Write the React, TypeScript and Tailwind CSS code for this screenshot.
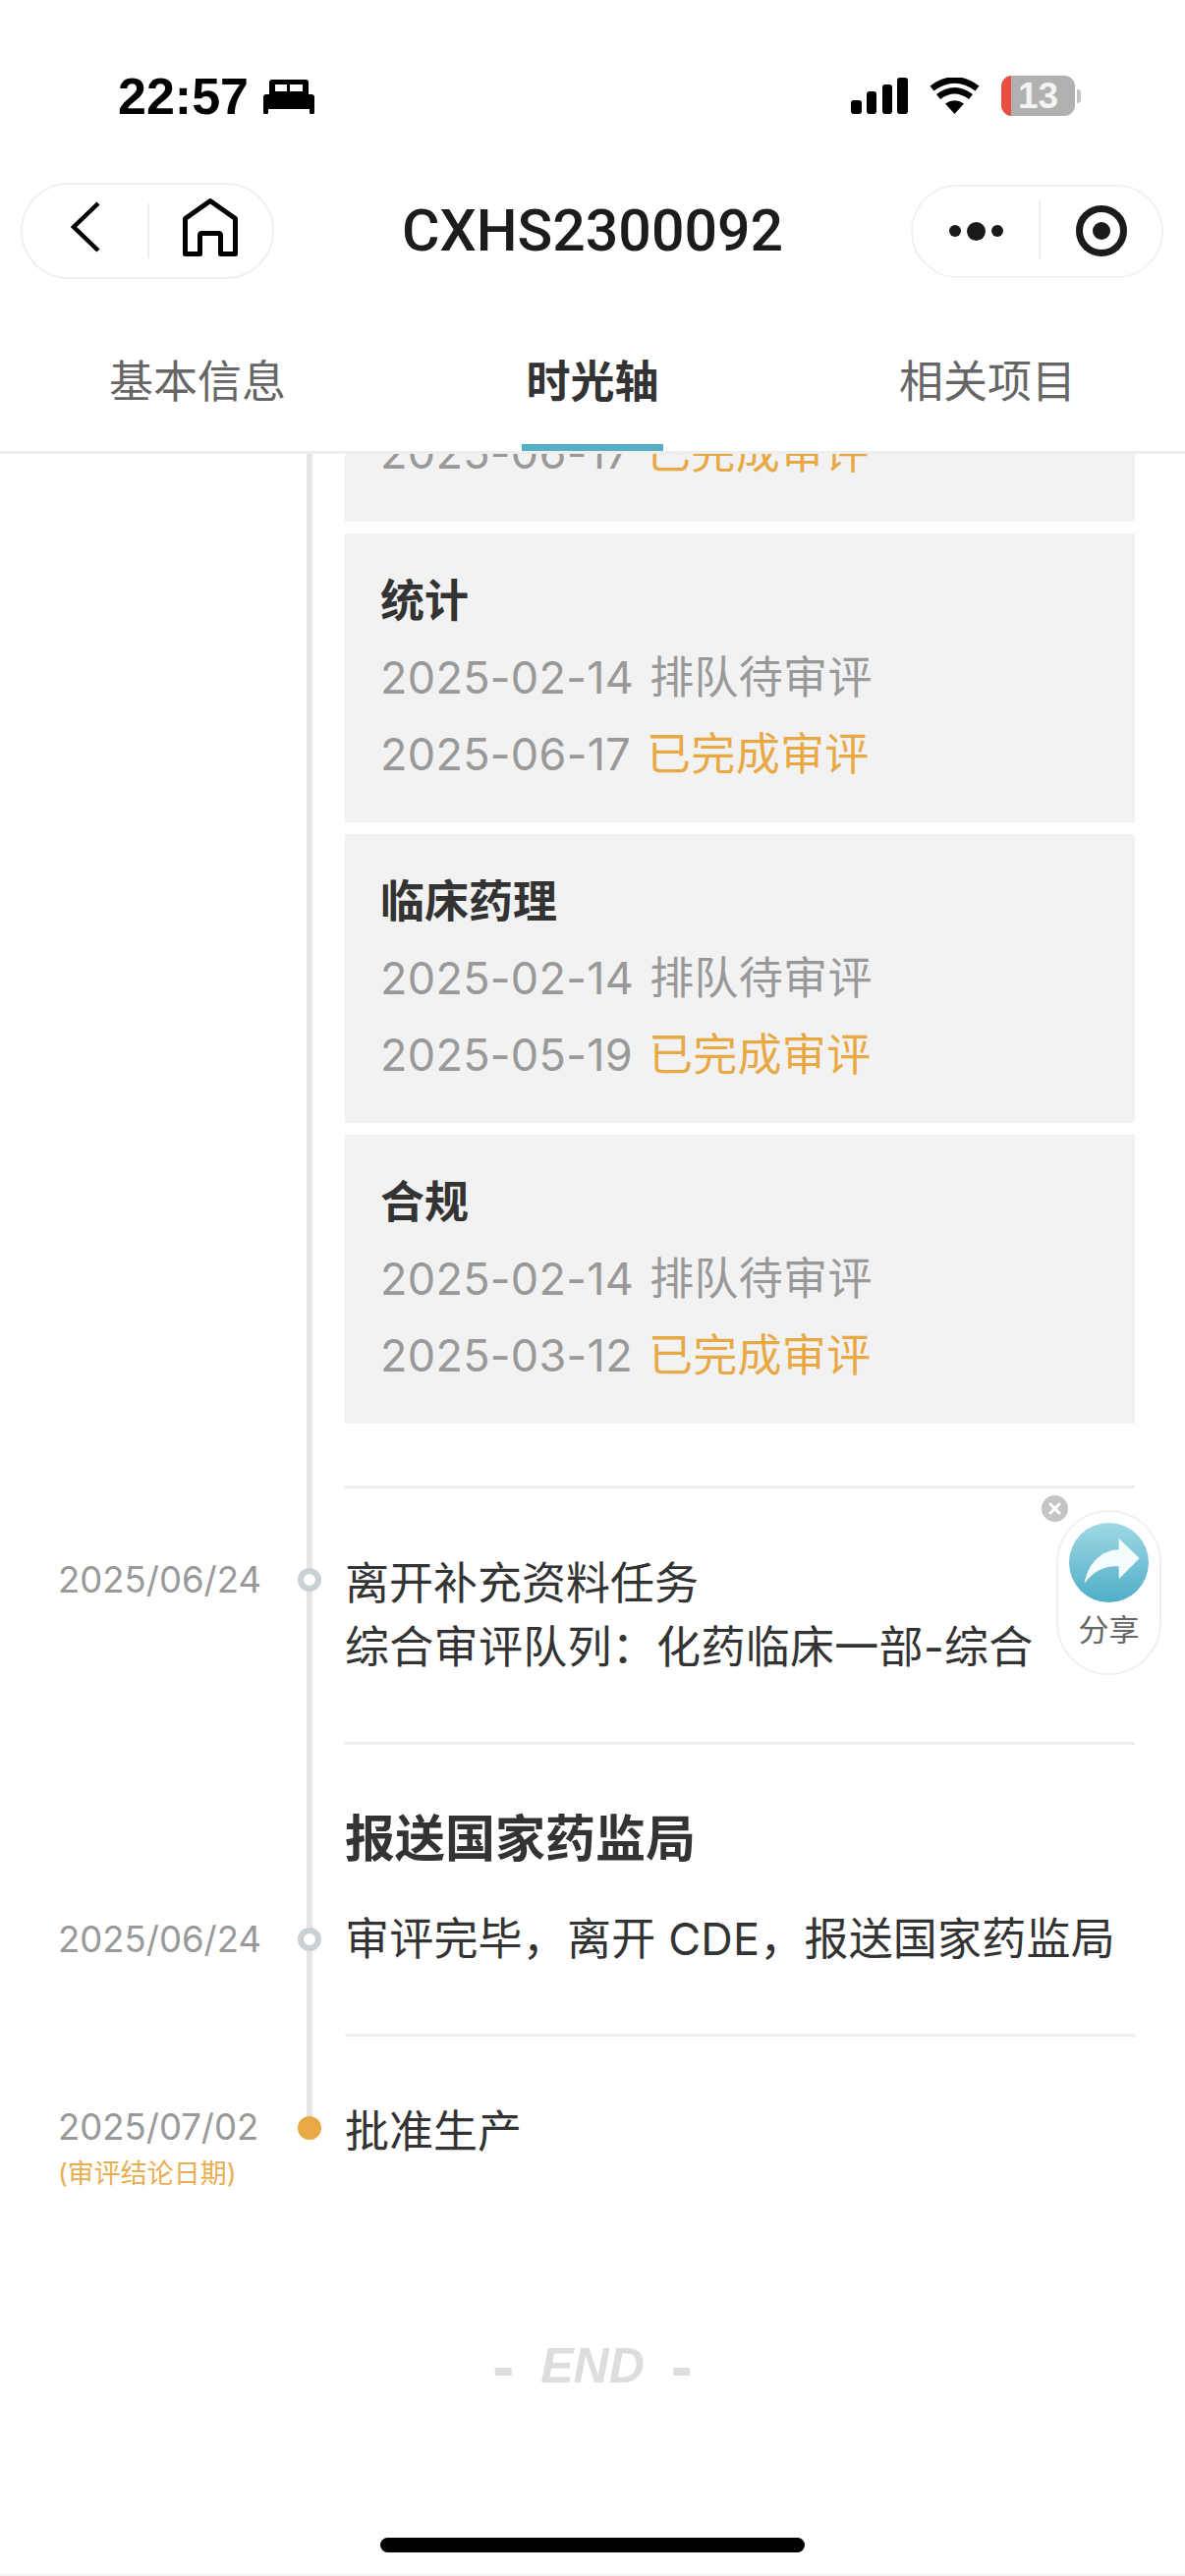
const cjk = "font-['Inter','Noto_Sans_CJK_SC',sans-serif]";

function Card({ title, a, b }: { title: string; a: string; b: string }) {
  return (
    <div className="h-[294px] bg-[#f2f2f2] py-[30px] pl-[36px] text-[45px] leading-[78px]">
      <div className="font-bold text-[#333]">{title}</div>
      <div className="tracking-[0.3px] text-[#999] [word-spacing:3px]">{a} 排队待审评</div>
      <div className="tracking-[0.3px] text-[#999] [word-spacing:3px]">
        {b} <span className="text-[#e8a945]">已完成审评</span>
      </div>
    </div>
  );
}

function StatusBar() {
  return (
    <div className="flex h-[186px] items-start justify-between pt-[77px] pl-[120px] pr-[106px]">
      <div className="flex items-center gap-[15px]">
        <span className="font-['Liberation_Sans',sans-serif] text-[52px] font-bold leading-[42px] text-black">22:57</span>
        <svg width="52" height="35" viewBox="0 0 52 35" className="fill-black">
          <path d="M9 0h34a3 3 0 0 1 3 3v12H6V3a3 3 0 0 1 3-3z" />
          <rect x="12" y="5" width="12" height="7" fill="#fff" />
          <rect x="27" y="5" width="13" height="7" fill="#fff" />
          <path d="M3 15h46a3 3 0 0 1 3 3v12H0V18a3 3 0 0 1 3-3z" />
          <rect x="0" y="28" width="5" height="7" rx="1.5" />
          <rect x="47" y="28" width="5" height="7" rx="1.5" />
        </svg>
      </div>
      <div className="flex items-center">
        <svg width="58" height="37" viewBox="0 0 58 37" className="fill-black">
          <rect x="0" y="23" width="11" height="14" rx="3" />
          <rect x="16" y="14" width="10" height="23" rx="3" />
          <rect x="32" y="7" width="10" height="30" rx="3" />
          <rect x="47" y="0" width="11" height="37" rx="3" />
        </svg>
        <svg width="51" height="37" viewBox="0 0 51 37" className="ml-[22px]">
          <path d="M25.5 37 16 26.500Q25.500 20 35 26.500Z" fill="#000" />
          <path d="M9 19.500Q25.500 7 42 19.500" fill="none" stroke="#000" strokeWidth="6.500" />
          <path d="M2.500 11Q25.500-6 48.500 11" fill="none" stroke="#000" strokeWidth="6.500" />
        </svg>
        <div className="relative ml-[22px] flex h-[41px] w-[75px] items-center justify-center overflow-hidden rounded-[11px] bg-[#b1b1b1]">
          <div className="absolute inset-y-0 left-0 w-[10px] bg-[#e9503f]" />
          <span className="relative font-['Liberation_Sans',sans-serif] text-[37px] font-bold leading-none text-[#f4f4f4]">13</span>
        </div>
        <div className="ml-[2px] h-[14px] w-[4px] rounded-r-full bg-[#c2c2c2]" />
      </div>
    </div>
  );
}

function NavBar() {
  return (
    <div className="relative flex h-[98px] items-center justify-between pl-[21px] pr-[22px]">
      <div className="flex h-[98px] w-[258px] items-center rounded-full border-2 border-[#f0f0f0]">
        <div className="flex w-[127px] justify-center pb-[8px]">
          <svg width="30" height="52" viewBox="0 0 30 52" fill="none" stroke="#000" strokeWidth="4.500">
            <path d="M28 2 3 26l25 24" />
          </svg>
        </div>
        <div className="h-[56px] w-[2px] bg-[#eeeeee]" />
        <div className="flex flex-1 justify-center pb-[8px] pr-[2px]">
          <svg width="56" height="59" viewBox="0 0 56 59" fill="none" stroke="#000" strokeWidth="5" strokeLinejoin="round">
            <path d="M2.500 56.500V20.500L28 2.500l25.500 18v36H38.500V37.500q0-2-2-2H19.500q-2 0-2 2v19z" />
          </svg>
        </div>
      </div>
      <div className="absolute inset-x-0 text-center font-['Roboto',sans-serif] text-[59px] font-medium leading-[98px] text-[#1c1c1c]">CXHS2300092</div>
      <div className="relative flex h-[95px] w-[257px] items-center rounded-full border-2 border-[#f2f2f2]">
        <div className="flex w-[128px] items-center justify-center gap-[6px]">
          <div className="h-[12px] w-[12px] rounded-full bg-[#1a1a1a]" />
          <div className="h-[19px] w-[19px] rounded-full bg-[#1a1a1a]" />
          <div className="h-[12px] w-[12px] rounded-full bg-[#1a1a1a]" />
        </div>
        <div className="h-[60px] w-[2px] bg-[#eeeeee]" />
        <div className="flex flex-1 justify-center">
          <div className="flex h-[52px] w-[52px] items-center justify-center rounded-full border-[7px] border-[#1a1a1a]">
            <div className="h-[18px] w-[18px] rounded-full bg-[#1a1a1a]" />
          </div>
        </div>
      </div>
    </div>
  );
}

function Tabs() {
  return (
    <div className="relative z-10 grid h-[178px] grid-cols-3 border-b-[3px] border-[#eeeeee] bg-white text-center text-[45px]">
      <div className="flex h-[175px] justify-center pt-[75px] leading-[60px] text-[#666]">基本信息</div>
      <div className="relative flex h-[175px] justify-center pt-[75px] font-bold leading-[60px] text-[#333]">
        时光轴
        <div className="absolute bottom-0 left-[129px] h-[7px] w-[144px] bg-[#55afc5]" />
      </div>
      <div className="flex h-[175px] justify-center pt-[75px] leading-[60px] text-[#666]">相关项目</div>
    </div>
  );
}

function Share() {
  return (
    <div className="absolute left-[1075px] top-[1075px] flex h-[168px] w-[107px] flex-col items-center rounded-full border-2 border-[#f0f0f0] bg-white pt-[11px]">
      <svg width="81" height="81" viewBox="0 0 81 81" className="shrink-0">
        <defs>
          <linearGradient id="share" x1="0" y1="0" x2="0" y2="1">
            <stop offset="0" stopColor="#a0d8e4" />
            <stop offset="1" stopColor="#4eaec8" />
          </linearGradient>
        </defs>
        <circle cx="40.500" cy="40.500" r="40.500" fill="url(#share)" />
        <path d="M50.700 16 71.700 36 50.700 57.300V44.500C36 43 24 50 15.700 61.700 19 42 32 28 50.700 27.300Z" fill="#f4fbfd" />
      </svg>
      <span className="mt-[8px] text-[31px] leading-[40px] text-[#666]">分享</span>
      <div className="absolute -left-[17px] -top-[17px] flex h-[27px] w-[27px] items-center justify-center rounded-full bg-[#c4c4c4]">
        <svg width="13" height="13" viewBox="0 0 13 13" stroke="#fff" strokeWidth="3" strokeLinecap="round">
          <path d="M2 2l9 9M11 2l-9 9" />
        </svg>
      </div>
    </div>
  );
}

function Dot({ active }: { active?: boolean }) {
  return active ? (
    <div className="absolute left-[303px] top-[-12px] h-[24px] w-[24px] rounded-full bg-[#e8a945]" />
  ) : (
    <div className="absolute left-[303px] top-[-12px] h-[24px] w-[24px] rounded-full border-[6px] border-[#c9d1d4] bg-white" />
  );
}

export default function App() {
  return (
    <div className={`relative flex h-[2622px] w-[1206px] flex-col overflow-hidden bg-white ${cjk}`}>
      <div className="bg-white">
        <StatusBar />
        <NavBar />
        <Tabs />
      </div>
      <main className="relative flex-1 overflow-hidden">
        <div className="absolute left-[312px] top-0 h-[1704px] w-[6px] bg-[#e5e5e5]" />
        <div className="ml-[351px] mr-[51px] flex flex-col gap-[12px]">
          <div className="-mt-[40px] h-[109px] bg-[#f2f2f2] pl-[36px] text-[45px] leading-[78px] tracking-[0.3px] text-[#999] [word-spacing:3px]">
            2025-06-17 <span className="text-[#e8a945]">已完成审评</span>
          </div>
          <Card title="统计" a="2025-02-14" b="2025-06-17" />
          <Card title="临床药理" a="2025-02-14" b="2025-05-19" />
          <Card title="合规" a="2025-02-14" b="2025-03-12" />
        </div>

        <div className="ml-[351px] mr-[51px] mt-[63px] h-[3px] bg-[#eeeeee]" />
        <div className="relative flex h-[258px] flex-col justify-center pl-[351px] pr-[51px]">
          <div className="relative">
            <div className="absolute left-[-292px] top-[7px] text-[36.5px] leading-[44px] text-[#999]">2025/06/24</div>
            <div className="text-[45px] leading-[65px] text-[#333]">离开补充资料任务</div>
            <div className="whitespace-nowrap text-[45px] leading-[65px] tracking-[0.3px] text-[#333]">综合审评队列：化药临床一部-综合</div>
          </div>
          <div className="absolute left-0 top-[93px]"><Dot /></div>
        </div>

        <div className="ml-[351px] mr-[51px] h-[3px] bg-[#eeeeee]" />
        <div className="relative h-[294px] pl-[351px] pr-[51px] pt-[61px]">
          <div className="text-[51px] font-bold leading-[70px] text-[#333]">报送国家药监局</div>
          <div className="mt-[33px] whitespace-nowrap text-[45px] leading-[67px] tracking-[0.2px] text-[#333]">审评完毕，离开 CDE，报送国家药监局</div>
          <div className="absolute left-[59px] top-[176px] text-[36.5px] leading-[44px] text-[#999]">2025/06/24</div>
          <div className="absolute left-0 top-[198px]"><Dot /></div>
        </div>

        <div className="ml-[351px] mr-[51px] h-[3px] bg-[#eeeeee]" />
        <div className="relative h-[250px] pl-[351px] pt-[63px]">
          <div className="text-[45px] leading-[67px] text-[#333]">批准生产</div>
          <div className="absolute left-[59px] top-[70px] text-[36.5px] leading-[44px] text-[#999]">2025/07/02</div>
          <div className="absolute left-[59px] top-[120px] text-[27px] leading-[40px] text-[#e8ae52]">(审评结论日期)</div>
          <div className="absolute left-0 top-[93px]"><Dot active /></div>
        </div>

        <div className="mt-[55px] flex h-[60px] items-center justify-center gap-[27px] font-['Liberation_Sans',sans-serif] text-[50px] font-bold italic leading-[60px] text-[#dddddd]">
          <span className="text-[66px] not-italic">-</span>
          <span>END</span>
          <span className="text-[66px] not-italic">-</span>
        </div>

        <div className="mx-auto mt-[145px] h-[15px] w-[432px] rounded-full bg-black" />
        <div className="mt-[22px] h-[2px] bg-[#f5f5f5]" />
        <Share />
      </main>
    </div>
  );
}
